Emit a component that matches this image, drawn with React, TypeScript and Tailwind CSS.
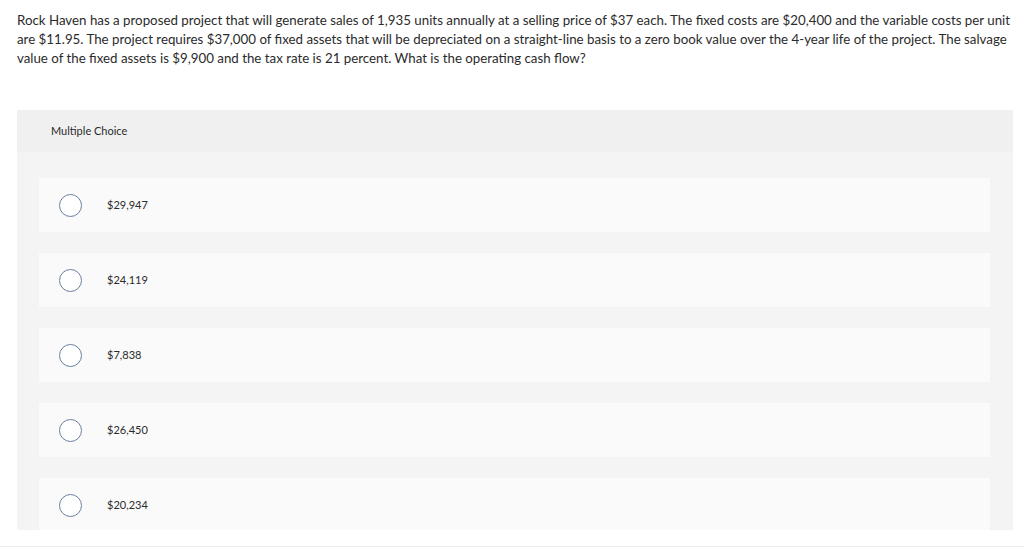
import React from 'react';

const choices = ['$29,947', '$24,119', '$7,838', '$26,450', '$20,234'];

export default function App() {
    return (
        <div className="w-[1024px] h-[550px] bg-white overflow-hidden relative text-[#2b2b2b]" style={{ fontFamily: 'Lato, "Open Sans", sans-serif' }}>
            <p className="pl-[17px] pr-[10px] pt-[11px] text-[13.3px] leading-[19px]">
                Rock Haven has a proposed project that will generate sales of 1,935 units annually at a selling price of $37 each. The fixed costs are $20,400 and the variable costs per unit are $11.95. The project requires $37,000 of fixed assets that will be depreciated on a straight-line basis to a zero book value over the 4-year life of the project. The salvage value of the fixed assets is $9,900 and the tax rate is 21 percent. What is the operating cash flow?
            </p>

            <div className="mt-[42px] ml-[17px] mr-[11px] h-[420px] overflow-hidden bg-[#f4f4f4]">
                <div className="h-[42px] bg-[#f0f0f0] flex items-center pl-[34px] text-[11px]">Multiple Choice</div>
                <div className="flex flex-col gap-[21px] pt-[26px] pl-[22px] pr-[23px]">
                    {choices.map((c) => (
                        <div key={c} className="h-[54px] bg-[#fafafa] flex items-center pl-[20px]">
                            <span className="w-[23px] h-[23px] rounded-full border border-[#6a7fa0] bg-white shrink-0"></span>
                            <span className="ml-[25px] text-[11px]">{c}</span>
                        </div>
                    ))}
                </div>
            </div>

            <div className="absolute left-0 right-0 top-[546px] h-px bg-[#ececec]"></div>
        </div>
    );
}
